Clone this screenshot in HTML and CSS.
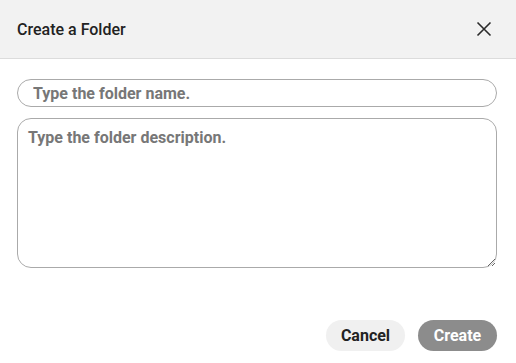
FILE: index.html
```
<!DOCTYPE html>
<html>
<head>
<meta charset="utf-8">
<link rel="stylesheet" href="styles.css">
</head>
<body>
<div class="modal">
  <header class="modal-header">
    <h1 class="title">Create a Folder</h1>
    <button class="close" aria-label="Close">
      <svg width="16" height="16" viewBox="0 0 16 16"><path d="M1.5 1.5 L14.5 14.5 M14.5 1.5 L1.5 14.5" stroke="#2b2b2b" stroke-width="1.6" fill="none"/></svg>
    </button>
  </header>
  <div class="modal-body">
    <input class="name-input" type="text" placeholder="Type the folder name.">
    <textarea class="desc-input" placeholder="Type the folder description."></textarea>
  </div>
  <footer class="modal-footer">
    <button class="btn btn-cancel">Cancel</button>
    <button class="btn btn-create">Create</button>
  </footer>
</div>
</body>
</html>
```
FILE: styles.css
```
* { box-sizing: border-box; }
html, body { margin: 0; padding: 0; background: #fff; }
body { font-family: Roboto, "Liberation Sans", sans-serif; }
.modal { width: 516px; height: 363px; display: flex; flex-direction: column; }
.modal-header {
  height: 59px;
  background: #f2f2f2;
  border-bottom: 1px solid #dcdcdc;
  display: flex;
  align-items: center;
  justify-content: space-between;
  padding: 0 24px 0 17px;
}
.title { margin: 0; font-size: 16px; font-weight: 500; color: #222; }
.close { background: none; border: 0; padding: 0; width: 16px; height: 16px; display: flex; cursor: pointer; }
.modal-body {
  padding: 20px 19px 0 17px;
  display: flex;
  flex-direction: column;
  gap: 11px;
}
.name-input {
  height: 28px;
  border: 1px solid #aaa;
  border-radius: 14px;
  padding: 0 15px;
  font-family: inherit;
  font-size: 16px;
  outline: none;
}
.desc-input {
  height: 150px;
  border: 1px solid #aaa;
  border-radius: 14px;
  padding: 9px 10px;
  font-family: inherit;
  font-size: 16px;
  resize: vertical;
  outline: none;
  margin: 0;
}
.name-input::placeholder, .desc-input::placeholder { color: #777; font-weight: 700; opacity: 1; }
.modal-footer {
  margin-top: auto;
  padding: 0 19px 12px 0;
  display: flex;
  justify-content: flex-end;
  gap: 13px;
}
.btn {
  width: 79px;
  height: 31px;
  border: 0;
  border-radius: 16px;
  font-family: inherit;
  font-size: 16px;
  font-weight: 700;
  cursor: pointer;
}
.btn-cancel { background: #f0f0f0; color: #222; }
.btn-create { background: #8c8c8c; color: #fff; }
```
